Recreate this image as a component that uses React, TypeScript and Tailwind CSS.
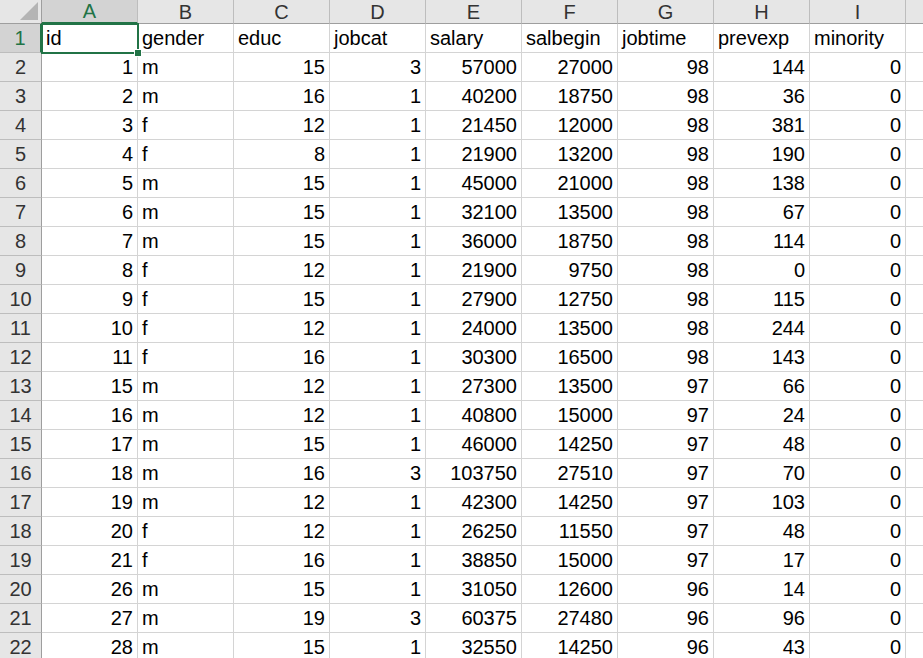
import React from 'react';

const columns = ['A', 'B', 'C', 'D', 'E', 'F', 'G', 'H', 'I'];

const header = ['id', 'gender', 'educ', 'jobcat', 'salary', 'salbegin', 'jobtime', 'prevexp', 'minority'];

const rows: (number | string)[][] = [
  [1, 'm', 15, 3, 57000, 27000, 98, 144, 0],
  [2, 'm', 16, 1, 40200, 18750, 98, 36, 0],
  [3, 'f', 12, 1, 21450, 12000, 98, 381, 0],
  [4, 'f', 8, 1, 21900, 13200, 98, 190, 0],
  [5, 'm', 15, 1, 45000, 21000, 98, 138, 0],
  [6, 'm', 15, 1, 32100, 13500, 98, 67, 0],
  [7, 'm', 15, 1, 36000, 18750, 98, 114, 0],
  [8, 'f', 12, 1, 21900, 9750, 98, 0, 0],
  [9, 'f', 15, 1, 27900, 12750, 98, 115, 0],
  [10, 'f', 12, 1, 24000, 13500, 98, 244, 0],
  [11, 'f', 16, 1, 30300, 16500, 98, 143, 0],
  [15, 'm', 12, 1, 27300, 13500, 97, 66, 0],
  [16, 'm', 12, 1, 40800, 15000, 97, 24, 0],
  [17, 'm', 15, 1, 46000, 14250, 97, 48, 0],
  [18, 'm', 16, 3, 103750, 27510, 97, 70, 0],
  [19, 'm', 12, 1, 42300, 14250, 97, 103, 0],
  [20, 'f', 12, 1, 26250, 11550, 97, 48, 0],
  [21, 'f', 16, 1, 38850, 15000, 97, 17, 0],
  [26, 'm', 15, 1, 31050, 12600, 96, 14, 0],
  [27, 'm', 19, 3, 60375, 27480, 96, 96, 0],
  [28, 'm', 15, 1, 32550, 14250, 96, 43, 0],
];

const gridCols = 'grid grid-cols-[42px_repeat(9,96px)_1fr]';

export default function App() {
  return (
    <div
      className="w-[923px] h-[658px] overflow-hidden bg-white text-[20px] leading-none text-black"
      style={{ fontFamily: '"Liberation Sans", Arial, sans-serif' }}
    >
      {/* Column headers */}
      <div className={`${gridCols} h-[24px]`}>
        <div className="relative bg-[#e6e6e6] border-r border-b border-[#9e9e9e]">
          <svg className="absolute right-[3px] bottom-[3px]" width="18" height="18" viewBox="0 0 18 18">
            <polygon points="18,0 18,18 0,18" fill="#b4b4b4" />
          </svg>
        </div>
        {columns.map((c, i) => (
          <div
            key={c}
            className={`flex items-center justify-center border-r border-[#bdbdbd] ${
              i === 0
                ? 'bg-[#d3d3d3] text-[#217346] border-b-2 border-b-[#217346]'
                : 'bg-[#e6e6e6] text-[#333] border-b border-b-[#9e9e9e]'
            }`}
          >
            {c}
          </div>
        ))}
        <div className="bg-[#e6e6e6] border-b border-[#9e9e9e]" />
      </div>

      {/* Header row */}
      <div className={`${gridCols} h-[29px]`}>
        <div className="flex items-center justify-center bg-[#d3d3d3] text-[#217346] border-r-2 border-[#217346] border-b border-b-[#bdbdbd]">
          1
        </div>
        {header.map((h, i) => (
          <div
            key={h}
            className="relative flex items-center pl-[4px] border-r border-b border-[#d4d4d4] whitespace-nowrap"
          >
            {h}
            {i === 0 && (
              <>
                <div className="absolute z-10 left-[-1px] top-[-1px] right-[-2px] bottom-[-2px] border-2 border-[#217346]" />
                <div className="absolute z-20 right-[-5px] bottom-[-5px] w-[8px] h-[8px] bg-[#217346] border border-white" />
              </>
            )}
          </div>
        ))}
        <div className="border-b border-[#d4d4d4]" />
      </div>

      {/* Data rows */}
      {rows.map((r, ri) => (
        <div key={ri} className={`${gridCols} h-[29px]`}>
          <div className="flex items-center justify-center bg-[#e6e6e6] text-[#333] border-r border-[#9e9e9e] border-b border-b-[#bdbdbd]">
            {ri + 2}
          </div>
          {r.map((v, ci) => (
            <div
              key={ci}
              className={`flex items-center border-r border-b border-[#d4d4d4] whitespace-nowrap ${
                typeof v === 'number' ? 'justify-end pr-[4px]' : 'pl-[4px]'
              }`}
            >
              {v}
            </div>
          ))}
          <div className="border-b border-[#d4d4d4]" />
        </div>
      ))}
    </div>
  );
}
